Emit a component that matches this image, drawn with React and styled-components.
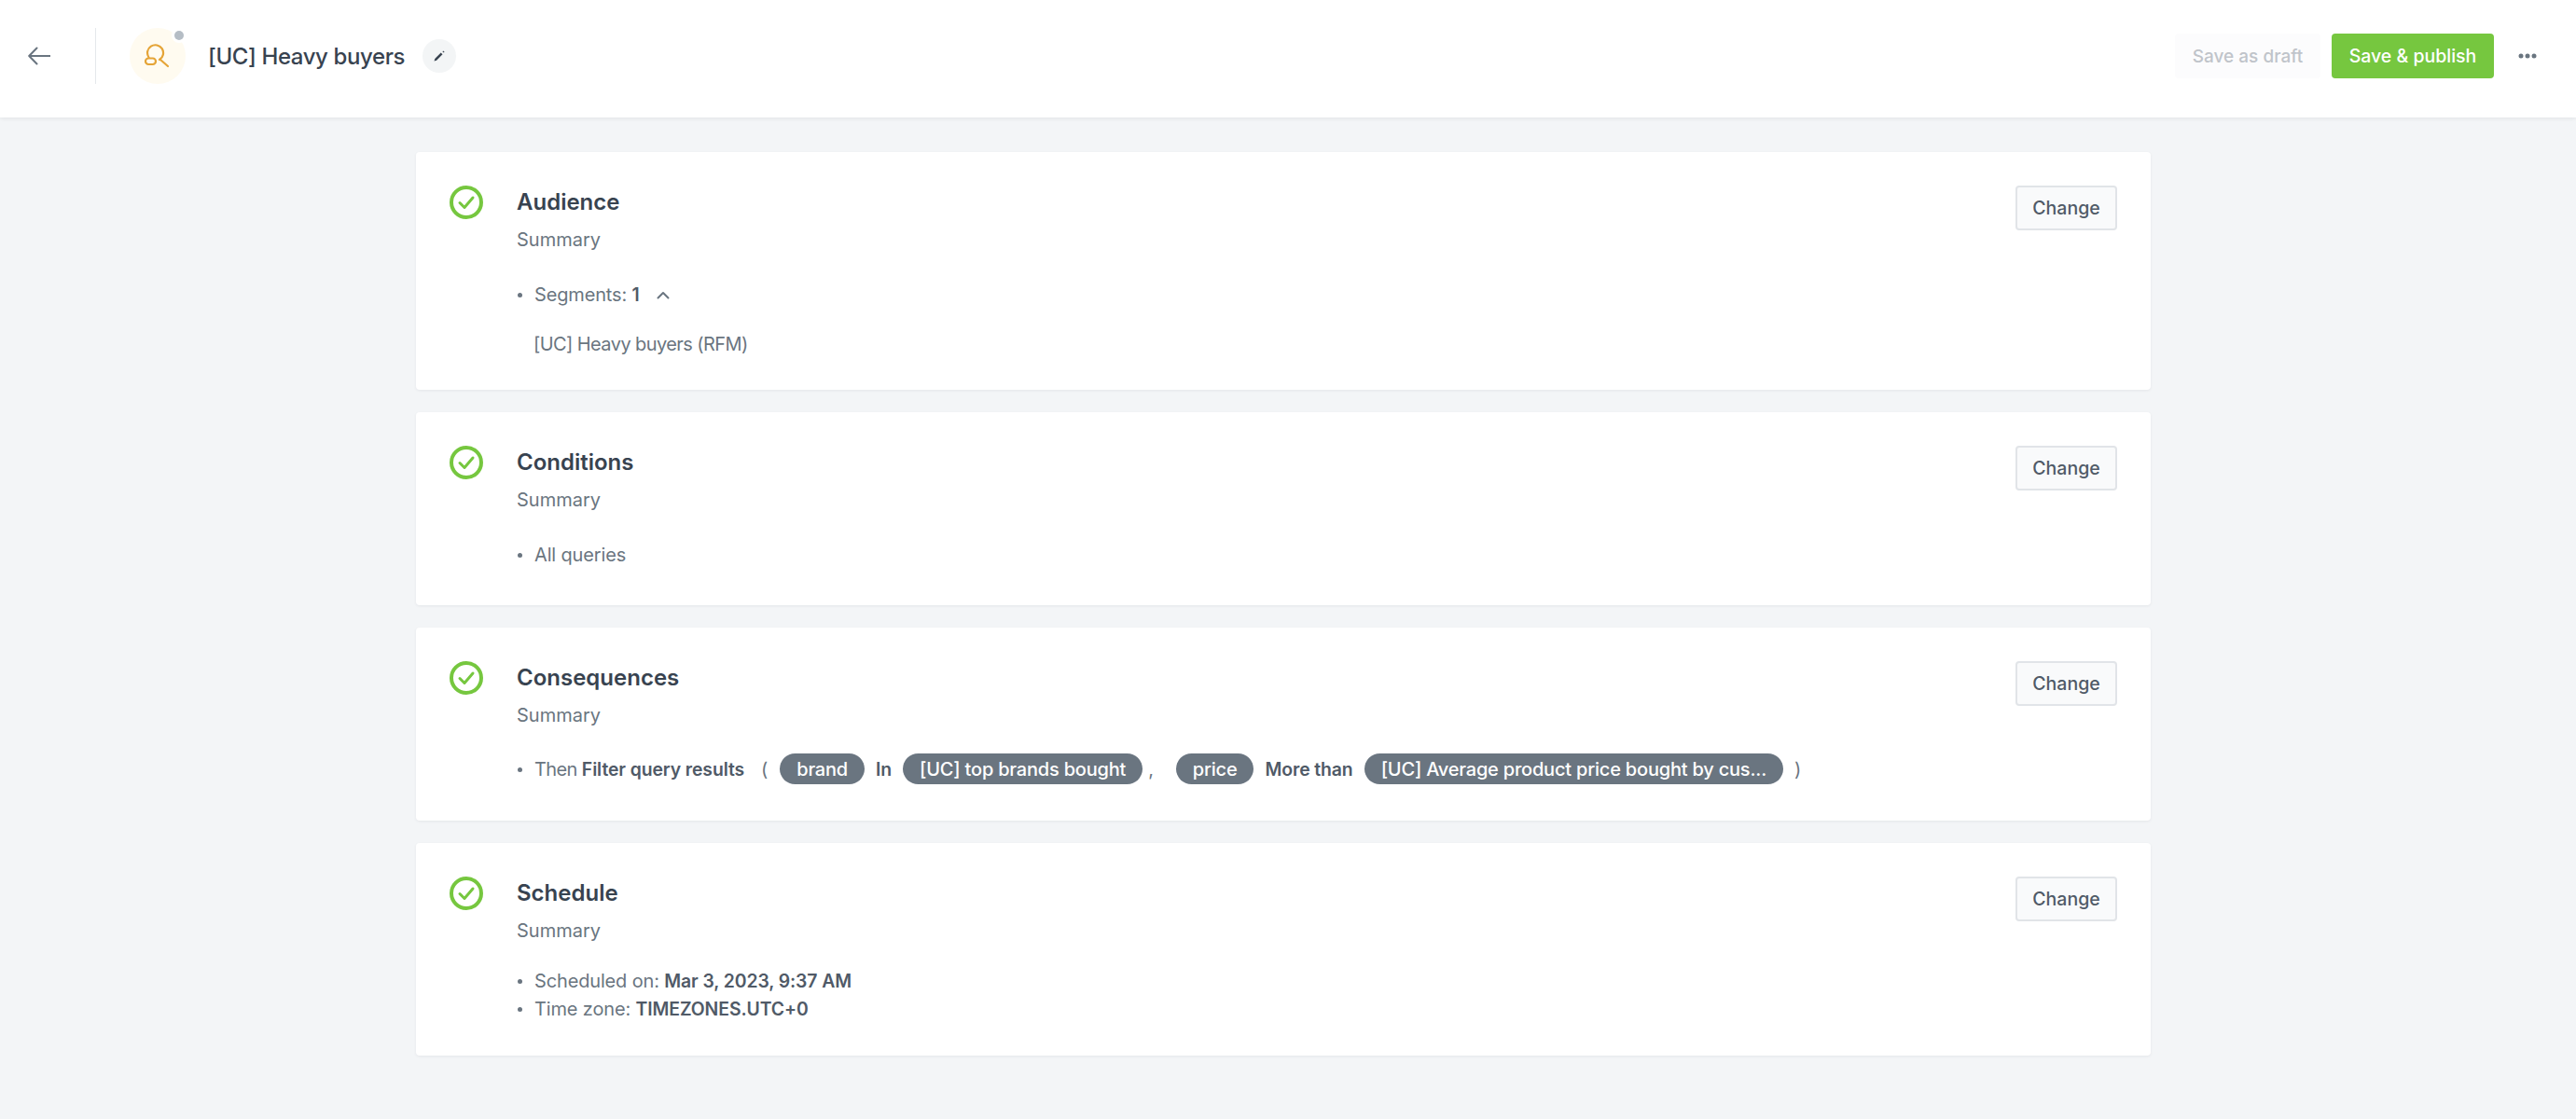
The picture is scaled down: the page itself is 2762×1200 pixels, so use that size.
import React from 'react';
import styled, { createGlobalStyle } from 'styled-components';

const GlobalStyle = createGlobalStyle`
  html, body {
    margin: 0;
    padding: 0;
    background: #f3f5f7;
    font-family: Inter, "Liberation Sans", sans-serif;
    -webkit-font-smoothing: antialiased;
  }
`;

const Page = styled.div`
  min-height: 1200px;
  background: #f3f5f7;
`;

// Header
const Header = styled.header`
  display: flex;
  align-items: center;
  height: 126px;
  padding: 0 42px 6px 30px;
  box-sizing: border-box;
  background: #fff;
  box-shadow: 0 1px 4px rgba(56, 67, 80, 0.1);
`;

const BackIcon = styled.svg`
  width: 24px;
  height: 20px;
  flex: none;
`;

const Divider = styled.div`
  width: 1px;
  height: 60px;
  margin: 0 36px 0 48px;
  background: #e5e8eb;
`;

const Avatar = styled.div`
  position: relative;
  display: flex;
  align-items: center;
  justify-content: center;
  width: 60px;
  height: 60px;
  border-radius: 50%;
  background: #fffbf0;
`;

const StatusDot = styled.span`
  position: absolute;
  top: 3px;
  right: 2px;
  width: 10px;
  height: 10px;
  border-radius: 50%;
  background: #b5bdc5;
  box-shadow: 0 0 0 3px #fff;
`;

const PageTitle = styled.h1`
  margin: 2px 0 0 24px;
  font-size: 24px;
  font-weight: 500;
  line-height: 32px;
  letter-spacing: -0.4px;
  color: #384350;
`;

const EditButton = styled.button`
  display: flex;
  align-items: center;
  justify-content: center;
  width: 36px;
  height: 36px;
  margin-left: 19px;
  padding: 0;
  border: 0;
  border-radius: 50%;
  background: #f3f5f6;
`;

const Actions = styled.div`
  display: flex;
  align-items: center;
  margin-left: auto;
`;

const DraftButton = styled.button`
  width: 156px;
  height: 48px;
  padding: 0;
  border: 0;
  border-radius: 4px;
  background: #fcfcfd;
  font: 500 19px Inter, sans-serif;
  color: #c0c4ca;
`;

const PublishButton = styled.button`
  width: 174px;
  height: 48px;
  margin-left: 12px;
  padding: 0;
  border: 0;
  border-radius: 4px;
  background: #76c73f;
  font: 500 19.5px Inter, sans-serif;
  color: #fff;
`;

const MoreIcon = styled.svg`
  width: 20px;
  height: 6px;
  margin-left: 26px;
`;

// Cards
const Content = styled.main`
  display: flex;
  flex-direction: column;
  gap: 24px;
  width: 1860px;
  margin: 37px 0 0 446px;
`;

const Card = styled.section`
  display: flex;
  align-items: flex-start;
  box-sizing: border-box;
  height: ${(p) => p.$height}px;
  padding: 36px;
  background: #fff;
  border-radius: 4px;
  box-shadow: 0 1px 3px rgba(56, 67, 80, 0.08);
`;

const CheckIcon = styled.svg`
  flex: none;
  width: 36px;
  height: 36px;
  margin-right: 36px;
`;

const Body = styled.div`
  flex: 1;
  min-width: 0;
`;

const CardTitle = styled.h2`
  margin: 0;
  font-size: 24px;
  font-weight: 600;
  line-height: 36px;
  color: #384350;
`;

const Summary = styled.div`
  margin-top: 6px;
  font-size: 20px;
  line-height: 32px;
  color: #6a7580;
`;

const List = styled.ul`
  margin: ${(p) => p.$top ?? 28}px 0 0;
  padding: 0;
  list-style: none;
`;

const Item = styled.li`
  position: relative;
  display: flex;
  align-items: center;
  height: ${(p) => p.$height ?? 30}px;
  padding-left: 19px;
  font-size: 20px;
  letter-spacing: -0.15px;
  color: #6a7580;
  white-space: pre;

  &::before {
    content: '';
    position: absolute;
    left: 1px;
    top: 50%;
    width: 5px;
    height: 5px;
    margin-top: -2px;
    border-radius: 50%;
    background: #6a7580;
  }
`;

const Lead = styled.span`
  letter-spacing: -0.6px;
`;

const Strong = styled.b`
  font-weight: 600;
  font-size: 19.4px;
  letter-spacing: -0.1px;
  color: #505a67;
`;

const SegmentName = styled.div`
  margin: 23px 0 0 18px;
  font-size: 20px;
  line-height: 30px;
  letter-spacing: -0.58px;
  color: #6a7580;
`;

const Chevron = styled.svg`
  width: 14px;
  height: 9px;
  margin-left: 18px;
`;

const Pill = styled.span`
  display: inline-flex;
  align-items: center;
  height: 33px;
  padding: 0 18px;
  border-radius: 17px;
  background: #6a7580;
  font-size: 20px;
  font-weight: 500;
  letter-spacing: -0.2px;
  color: #fff;
`;

const Punct = styled.span`
  margin: 0 ${(p) => p.$right ?? 12}px 0 ${(p) => p.$left ?? 12}px;
`;

const ChangeButton = styled.button`
  flex: none;
  width: 109px;
  height: 48px;
  padding: 0;
  background: #f9fafb;
  border: 2px solid #e1e4e8;
  border-radius: 4px;
  font: 500 19.5px Inter, sans-serif;
  color: #505a67;
`;

function Check() {
  return (
    <CheckIcon viewBox="0 0 36 36" fill="none">
      <circle cx="18" cy="18" r="16" stroke="#76c73f" strokeWidth="4" />
      <path d="M11 18.5l5 5L25 13" stroke="#76c73f" strokeWidth="3" strokeLinecap="round" strokeLinejoin="round" />
    </CheckIcon>
  );
}

function StepCard({ title, height, children }) {
  return (
    <Card $height={height}>
      <Check />
      <Body>
        <CardTitle>{title}</CardTitle>
        <Summary>Summary</Summary>
        {children}
      </Body>
      <ChangeButton>Change</ChangeButton>
    </Card>
  );
}

export default function App() {
  return (
    <Page>
      <GlobalStyle />
      <Header>
        <BackIcon viewBox="0 0 24 20" fill="none">
          <path d="M23.5 10H1.5M9.5 1.5L1.2 10l8.3 8.5" stroke="#6a7580" strokeWidth="2" strokeLinecap="round" strokeLinejoin="round" />
        </BackIcon>
        <Divider />
        <Avatar>
          <svg width="28" height="26" viewBox="0 0 28 26" fill="none" stroke="#e5a436" strokeWidth="2.2" strokeLinecap="round">
            <path d="M4.5 14.5A8.5 8.5 0 1 1 16 17" />
            <rect x="1" y="15.5" width="11" height="6.5" rx="3.25" />
            <path d="M17 17l8 7" />
          </svg>
          <StatusDot />
        </Avatar>
        <PageTitle>[UC] Heavy buyers</PageTitle>
        <EditButton>
          <svg width="14" height="14" viewBox="0 0 14 14" fill="none">
            <path d="M1.5 12.5l.8-2.6 6.4-6.4 1.8 1.8-6.4 6.4z" fill="#384350" />
            <path d="M10.4 2.2l.8-.8 1.4 1.4-.8.8z" fill="#384350" />
          </svg>
        </EditButton>
        <Actions>
          <DraftButton>Save as draft</DraftButton>
          <PublishButton>Save &amp; publish</PublishButton>
          <MoreIcon viewBox="0 0 20 6" fill="#6a7580">
            <circle cx="3" cy="3" r="2.5" />
            <circle cx="10" cy="3" r="2.5" />
            <circle cx="17" cy="3" r="2.5" />
          </MoreIcon>
        </Actions>
      </Header>
      <Content>
        <StepCard title="Audience" height={255}>
          <List>
            <Item>
              Segments: <Strong>1</Strong>
              <Chevron viewBox="0 0 14 9" fill="none">
                <path d="M1.5 7.5L7 2l5.5 5.5" stroke="#6a7580" strokeWidth="2" strokeLinecap="round" strokeLinejoin="round" />
              </Chevron>
            </Item>
          </List>
          <SegmentName>[UC] Heavy buyers (RFM)</SegmentName>
        </StepCard>
        <StepCard title="Conditions" height={207}>
          <List>
            <Item>All queries</Item>
          </List>
        </StepCard>
        <StepCard title="Consequences" height={207}>
          <List $top={25}>
            <Item $height={33}>
              <Lead>Then </Lead><Strong>Filter query results</Strong>
              <Punct $left={18} $right={13}>(</Punct>
              <Pill>brand</Pill>
              <Punct><Strong>In</Strong></Punct>
              <Pill>[UC] top brands bought</Pill>
              <Punct $left={6} $right={24}>,</Punct>
              <Pill>price</Pill>
              <Punct><Strong>More than</Strong></Punct>
              <Pill>[UC] Average product price bought by cus...</Pill>
              <Punct>)</Punct>
            </Item>
          </List>
        </StepCard>
        <StepCard title="Schedule" height={228}>
          <List $top={23}>
            <Item>Scheduled on: <Strong>Mar 3, 2023, 9:37 AM</Strong></Item>
            <Item>Time zone: <Strong>TIMEZONES.UTC+0</Strong></Item>
          </List>
        </StepCard>
      </Content>
    </Page>
  );
}
